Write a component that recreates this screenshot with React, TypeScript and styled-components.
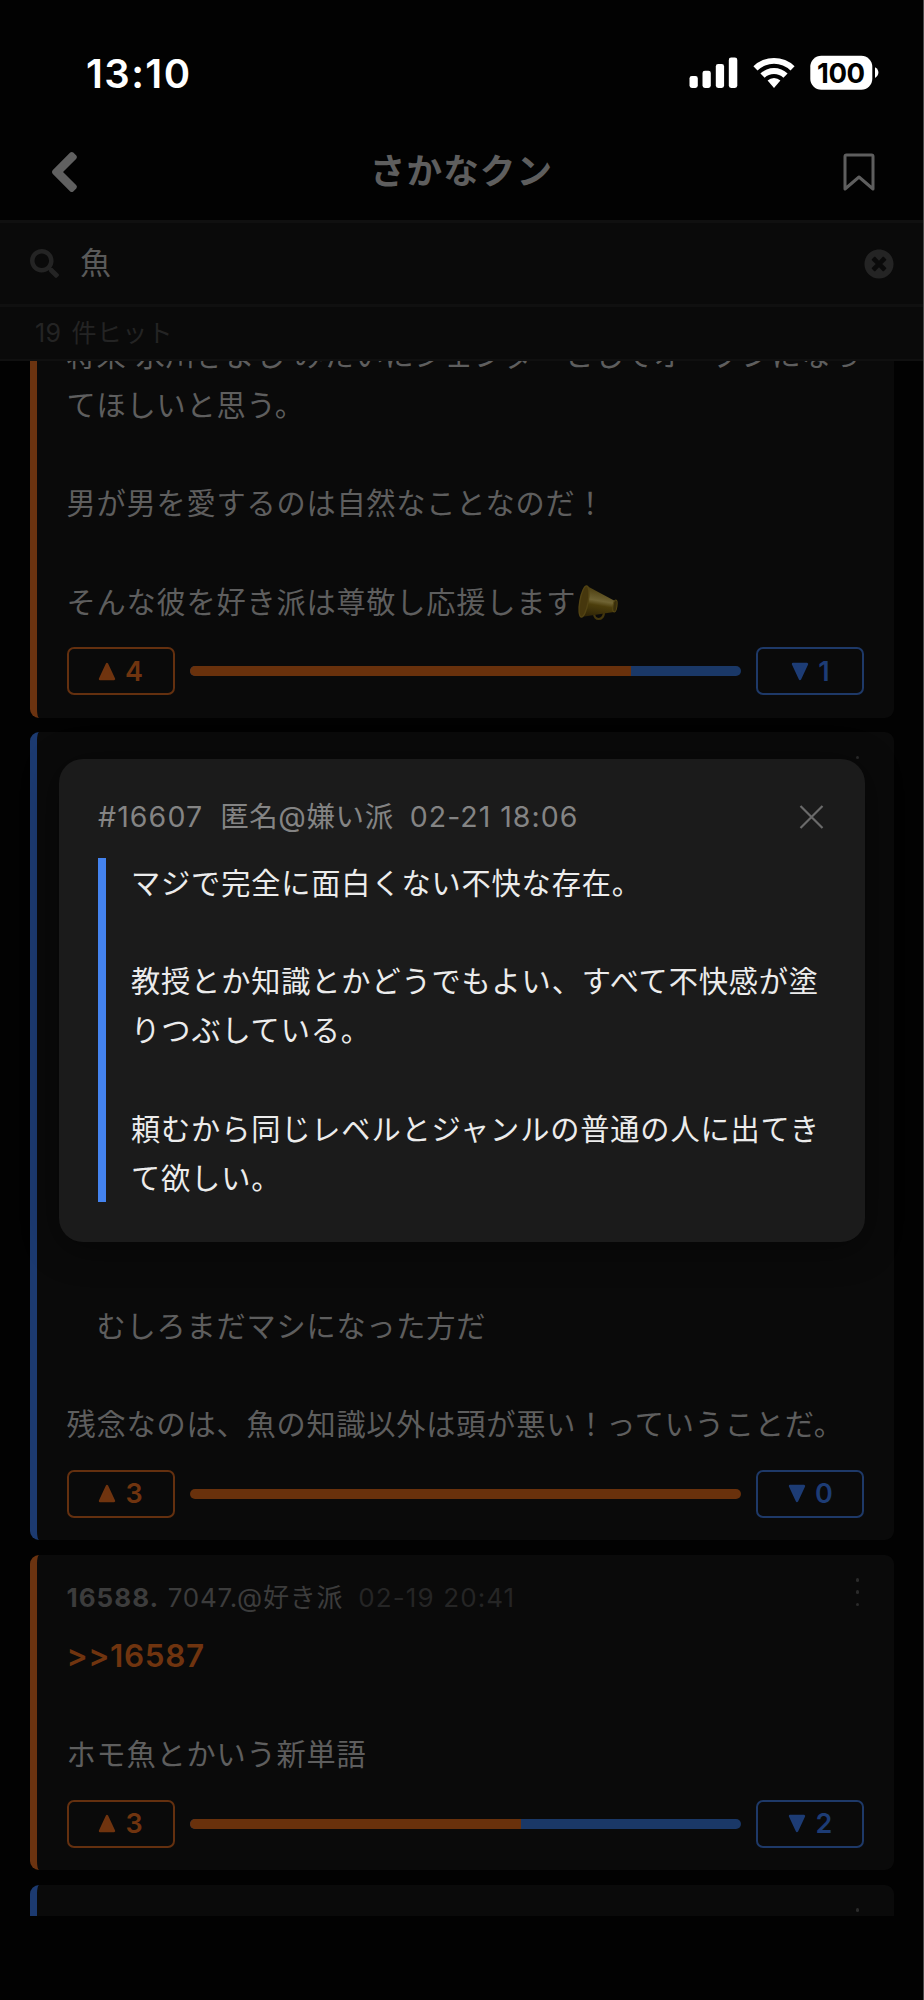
import React from "react";
import styled, { createGlobalStyle } from "styled-components";
import { FaSearch, FaTimesCircle } from "react-icons/fa";

type Side = "like" | "dislike";

const tone: Record<Side, { edge: string; fill: string; line: string; text: string }> = {
  like: { edge: "#6b3310", fill: "#69310c", line: "#64300f", text: "#70340f" },
  dislike: { edge: "#1c3a70", fill: "#1a3867", line: "#1e3968", text: "#1d3c75" },
};

const Global = createGlobalStyle`
  * { box-sizing: border-box; }
  body { margin: 0; background: #000; }
`;

const Screen = styled.div`
  position: relative;
  width: 924px;
  height: 2000px;
  display: flex;
  flex-direction: column;
  overflow: hidden;
  background: #020202;
  border-right: 1px solid #4a4a4a;
  font-family: Inter, "Noto Sans CJK JP", sans-serif;
  color: #5e5e5e;
`;

const StatusBar = styled.div`
  flex: none;
  height: 120px;
  padding: 26px 44px 0 86px;
  display: flex;
  align-items: center;
  color: #fff;
`;

const Clock = styled.div`
  font-size: 40px;
  font-weight: 600;
  letter-spacing: 1.4px;
  flex: 1;
`;

const BatteryText = styled.text`
  font-family: Inter, sans-serif;
  font-size: 27.5px;
  font-weight: 700;
`;

const TitleBar = styled.div`
  flex: none;
  height: 103px;
  padding: 4px 48px 0 50px;
  border-bottom: 3px solid #101010;
  display: flex;
  align-items: center;
  justify-content: space-between;
`;

const Title = styled.h1`
  margin: 0;
  font-size: 35.6px;
  line-height: 50px;
  letter-spacing: 1.1px;
  font-weight: 600;
`;

const SearchBar = styled.div`
  flex: none;
  height: 84px;
  padding: 0 29px 0 30px;
  border-bottom: 3px solid #101010;
  background: #0a0a0a;
  display: flex;
  align-items: center;
  color: #242424;
`;

const Query = styled.div`
  flex: 1;
  padding: 0 0 2px 21px;
  font-size: 31px;
  line-height: 42px;
  color: #5a5a5a;
`;

const HitCount = styled.div`
  flex: none;
  height: 54px;
  padding-left: 35px;
  border-bottom: 2px solid #101010;
  background: #0a0a0a;
  font-size: 25px;
  line-height: 53px;
  letter-spacing: 0.4px;
  word-spacing: 2.5px;
  color: #242424;
`;

const List = styled.div`
  flex: none;
  height: 1555px;
  padding: 0 29px 0 30px;
  overflow: hidden;
`;

const Scrolled = styled.div`
  margin-top: -51.7px;
  display: flex;
  flex-direction: column;
  gap: 14.5px;
`;

const CardBox = styled.article<{ $side: Side }>`
  padding: 22px 29.6px 22.5px 29.5px;
  border-left: 7.5px solid ${(p) => tone[p.$side].edge};
  border-radius: 9px;
  background: #0a0a0a;
`;

const CardHead = styled.header`
  height: 55px;
  display: flex;
  font-size: 26px;
  line-height: 41px;
  letter-spacing: 0.8px;
  color: #3c3c3c;
  white-space: pre;
`;

const Number = styled.b`
  font-weight: 700;
  letter-spacing: 1px;
  margin-right: 8.5px;
`;

const Stamp = styled.span`
  margin-left: 15px;
  letter-spacing: 1.1px;
  color: #252525;
  flex: 1;
`;

const Dots = styled.div`
  width: 14px;
  display: flex;
  flex-direction: column;
  align-items: center;
  gap: 8.5px;
  padding-top: 1.5px;
`;

const Dot = styled.i`
  width: 3.6px;
  height: 3.6px;
  border-radius: 50%;
  background: #2b2b2b;
`;

const Body = styled.div`
  font-size: 29.2px;
  line-height: 49.28px;
  letter-spacing: 0.8px;
  white-space: pre;
`;

const Anchor = styled.a`
  color: #70340f;
  font-size: 31.5px;
  line-height: 1;
  font-weight: 600;
  letter-spacing: 0.6px;
`;

const Votes = styled.div`
  margin-top: 20.1px;
  height: 48px;
  display: flex;
  align-items: center;
  gap: 15px;
`;

const VoteButton = styled.button<{ $side: Side }>`
  width: 108px;
  height: 48px;
  padding: 0;
  border: 2px solid ${(p) => tone[p.$side].line};
  border-radius: 7px;
  background: transparent;
  color: ${(p) => tone[p.$side].text};
  font: 600 27px/1 Inter, sans-serif;
  display: flex;
  align-items: center;
  justify-content: center;
  gap: 9px;
`;

const Ratio = styled.div`
  flex: 1;
  height: 10px;
  border-radius: 5px;
  overflow: hidden;
  background: ${tone.dislike.fill};
`;

const RatioFill = styled.div`
  height: 100%;
  background: ${tone.like.fill};
`;

const Overlay = styled.div`
  position: absolute;
  inset: 0 -1px 0 0;
  display: flex;
  align-items: center;
  justify-content: center;
`;

const Popup = styled.section`
  width: 806px;
  height: 483px;
  padding: 38px 41px 0 39px;
  border-radius: 24px;
  background: #1b1b1b;
  box-shadow: 0 6px 36px rgba(0, 0, 0, 0.45);
`;

const PopupHead = styled.header`
  height: 61px;
  display: flex;
  align-items: flex-start;
  font-size: 28.5px;
  line-height: 40px;
  color: #848484;
`;

const PopupMeta = styled.span<{ $gap?: number; $track?: number }>`
  margin-left: ${(p) => p.$gap ?? 0}px;
  letter-spacing: ${(p) => p.$track ?? 0}px;
`;

const Spacer = styled.span`
  flex: 1;
`;

const Quote = styled.blockquote`
  margin: 0;
  padding-left: 25px;
  border-left: 8px solid #4483ef;
  color: #ececec;
`;

const QuoteText = styled(Body)`
  position: relative;
  top: 1px;
  letter-spacing: 0.86px;
`;

const Up = () => (
  <svg width="18" height="19" viewBox="0 0 18 19">
    <path d="M9 2 16 17H2Z" fill="currentColor" stroke="currentColor" strokeWidth="2.4" strokeLinejoin="round" />
  </svg>
);

const Down = () => (
  <svg width="18" height="19" viewBox="0 0 18 19">
    <path d="M9 17 16 2H2Z" fill="currentColor" stroke="currentColor" strokeWidth="2.4" strokeLinejoin="round" />
  </svg>
);

const Back = () => (
  <svg width="30" height="44" viewBox="0 0 30 44">
    <path
      d="M2.6 20.3 20.2 2.6Q21.8 1.2 23.3 2.6L26.3 5.6Q27.7 7.2 26.3 8.8L13 22 26.3 35.2Q27.7 36.8 26.3 38.4L23.3 41.4Q21.8 42.8 20.2 41.4L2.6 23.7Q1.2 22 2.6 20.3Z"
      fill="#606060"
    />
  </svg>
);

const Megaphone = () => (
  <svg width="43" height="38" viewBox="0 0 43 38" style={{ verticalAlign: "-9px" }}>
    <defs>
      <linearGradient id="cone" x1="0.2" y1="0" x2="0" y2="1">
        <stop offset="0" stopColor="#4a3c0e" />
        <stop offset="0.4" stopColor="#706434" />
        <stop offset="0.55" stopColor="#4c3e0c" />
        <stop offset="1" stopColor="#2a2006" />
      </linearGradient>
    </defs>
    <path d="M18 29c0 8 9 8 10 0" fill="none" stroke="#43360d" strokeWidth="2.2" />
    <path d="M11 2 39 17c3 3 2 9-1 11L5 33Z" fill="url(#cone)" />
    <ellipse cx="39" cy="22" rx="2" ry="6" fill="#3a2f0c" stroke="#574915" strokeWidth="1" transform="rotate(8 39 22)" />
    <ellipse cx="8" cy="17.5" rx="4.2" ry="15.8" fill="#46370d" stroke="#534414" strokeWidth="1.4" transform="rotate(10 8 17.5)" />
  </svg>
);

const StatusIcons = () => (
  <svg width="190" height="36" viewBox="0 0 190 36" fill="#fff">
    <rect x="0.5" y="21" width="8.3" height="12" rx="2.4" />
    <rect x="13.5" y="15.7" width="8.3" height="17.3" rx="2.4" />
    <rect x="26.8" y="9" width="8.3" height="24" rx="2.4" />
    <rect x="39.8" y="2.5" width="8.5" height="30.5" rx="2.4" />
    <path d="M64.4 11.3a29.6 29.6 0 0 1 41.2 0l-4.1 4.2a23.6 23.6 0 0 0-33 0Z" />
    <path d="M71.4 18.5a19.7 19.7 0 0 1 27.2 0l-4.2 4.2a13.7 13.7 0 0 0-18.8 0Z" />
    <path d="M78.6 25.5a9.4 9.4 0 0 1 12.8 0L85 33Z" />
    <rect x="121.3" y="0.7" width="62" height="34" rx="11" />
    <path d="M186 12.3c4.5 2 4.5 8.6 0 10.6Z" />
    <BatteryText x="152" y="27.7" textAnchor="middle" textLength="48" fill="#000">
      100
    </BatteryText>
  </svg>
);

interface CardProps {
  side: Side;
  head?: React.ReactNode;
  up?: number;
  down?: number;
  children?: React.ReactNode;
}

const Card = ({ side, head, up, down = 0, children }: CardProps) => (
  <CardBox $side={side}>
    {head}
    <Body>{children}</Body>
    {up !== undefined && (
      <Votes>
        <VoteButton $side="like">
          <Up />
          {up}
        </VoteButton>
        <Ratio>
          <RatioFill style={{ width: `${(up / (up + down || 1)) * 100}%` }} />
        </Ratio>
        <VoteButton $side="dislike">
          <Down />
          {down}
        </VoteButton>
      </Votes>
    )}
  </CardBox>
);

const Menu = () => (
  <Dots>
    <Dot />
    <Dot />
    <Dot />
  </Dots>
);

export default function App() {
  return (
    <>
      <Global />
      <Screen>
        <StatusBar>
          <Clock>13:10</Clock>
          <StatusIcons />
        </StatusBar>
        <TitleBar>
          <Back />
          <Title>さかなクン</Title>
          <svg width="32" height="38" viewBox="0 0 32 38" fill="none">
            <path d="M2 3.5Q2 2 3.5 2h25Q30 2 30 3.5V36L16 24 2 36Z" stroke="#5e5e5e" strokeWidth="3" strokeLinejoin="round" />
          </svg>
        </TitleBar>
        <SearchBar>
          <FaSearch size={29} />
          <Query>魚</Query>
          <FaTimesCircle size={30} />
        </SearchBar>
        <HitCount>19 件ヒット</HitCount>
        <List>
          <Scrolled>
            <Card side="like" up={4} down={1}>
              {"将来 氷川きよし みたいにジェンダーとしてオープンになっ\nてほしいと思う。\n\n男が男を愛するのは自然なことなのだ！\n\nそんな彼を好き派は尊敬し応援します"}
              <Megaphone />
            </Card>
            <Card side="dislike" up={3} down={0} head={<CardHead><Spacer /><Menu /></CardHead>}>
              {"\n".repeat(10) + "　むしろまだマシになった方だ\n\n残念なのは、魚の知識以外は頭が悪い！っていうことだ。"}
            </Card>
            <Card
              side="like"
              up={3}
              down={2}
              head={
                <CardHead>
                  <Number>16588.</Number>7047.@好き派<Stamp>02-19 20:41</Stamp>
                  <Menu />
                </CardHead>
              }
            >
              <Anchor>{">>16587"}</Anchor>
              {"\n\nホモ魚とかいう新単語"}
            </Card>
            <Card side="dislike" head={<CardHead><Spacer /><Menu /></CardHead>} />
          </Scrolled>
        </List>
        <Overlay>
          <Popup>
            <PopupHead>
              <PopupMeta $track={1.1}>#16607</PopupMeta>
              <PopupMeta $gap={17} $track={0.6}>匿名@嫌い派</PopupMeta>
              <PopupMeta $gap={16} $track={1}>02-21 18:06</PopupMeta>
              <Spacer />
              <svg width="25" height="40" viewBox="0 0 25 40">
                <path d="M1.5 9 23.5 31M23.5 9 1.5 31" stroke="#6a6a6a" strokeWidth="2.2" />
              </svg>
            </PopupHead>
            <Quote>
              <QuoteText>
                {"マジで完全に面白くない不快な存在。\n\n教授とか知識とかどうでもよい、すべて不快感が塗\nりつぶしている。\n\n頼むから同じレベルとジャンルの普通の人に出てき\nて欲しい。"}
              </QuoteText>
            </Quote>
          </Popup>
        </Overlay>
      </Screen>
    </>
  );
}
